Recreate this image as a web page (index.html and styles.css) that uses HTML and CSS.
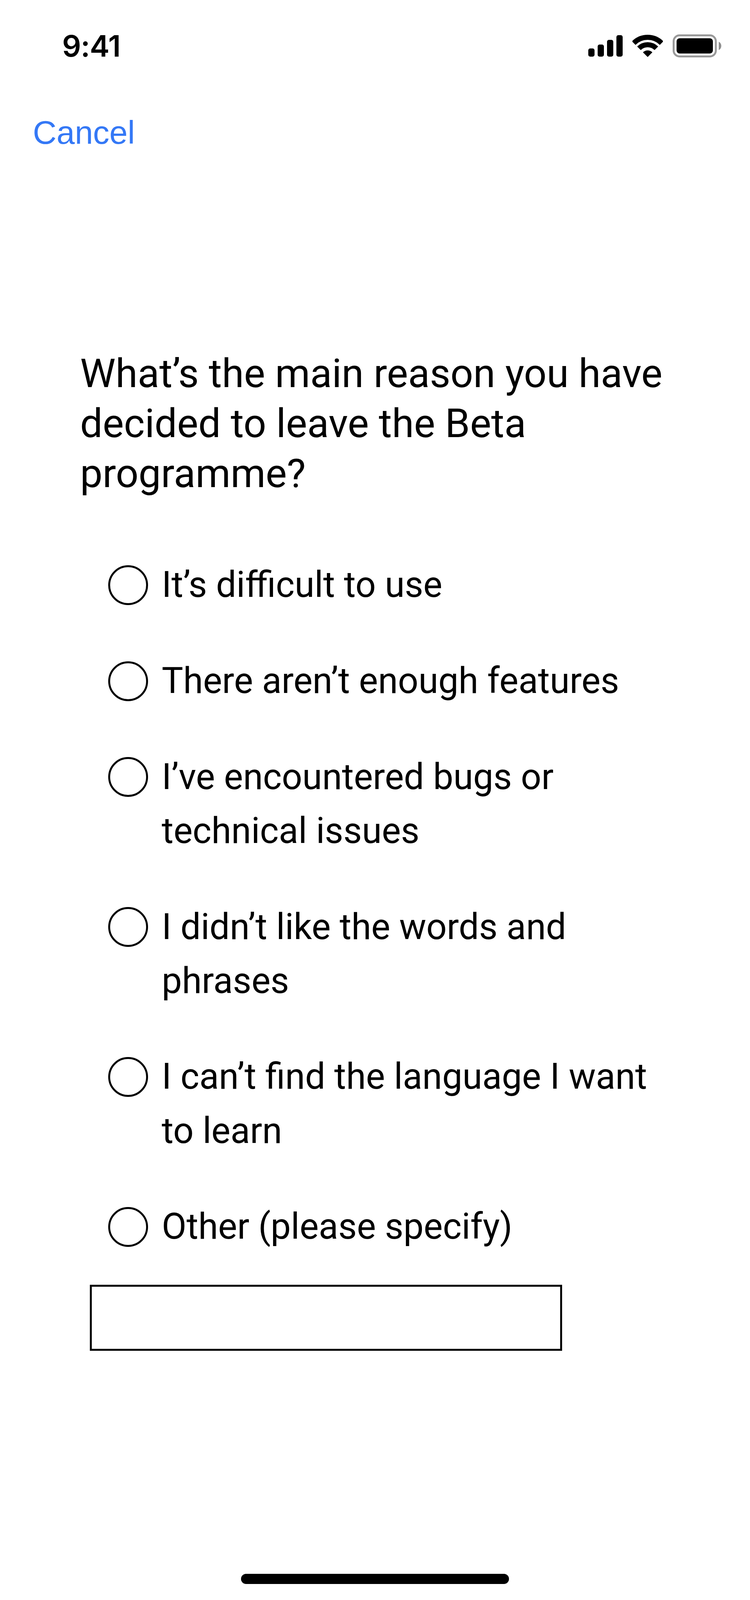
FILE: index.html
```html
<!DOCTYPE html>
<html lang="en">
<head>
    <meta charset="UTF-8">
    <meta name="viewport" content="width=device-width, initial-scale=1.0">
    <title>Leave the Beta programme</title>
    <link rel="stylesheet" href="styles.css">
</head>
<body>
    <div class="screen">
        <!-- Status bar -->
        <div class="status-bar">
            <span class="time">9:41</span>
            <div class="status-icons">
                <svg viewBox="0 0 88 55" width="88" height="55">
                    <rect x="0" y="34" width="16" height="21" rx="5"/>
                    <rect x="24" y="24" width="16" height="31" rx="5"/>
                    <rect x="48" y="12" width="16" height="43" rx="5"/>
                    <rect x="72" y="0" width="16" height="55" rx="5"/>
                </svg>
                <svg viewBox="0 0 78 57" width="78" height="57">
                    <path d="M3.3 21.3A50.5 50.5 0 0 1 74.7 21.3" fill="none" stroke="#000" stroke-width="13"/>
                    <path d="M16.7 34.7A31.5 31.5 0 0 1 61.3 34.7" fill="none" stroke="#000" stroke-width="13"/>
                    <path d="M39 57L27 45A17 17 0 0 1 51 45Z"/>
                </svg>
                <svg viewBox="0 0 125 59" width="125" height="59">
                    <rect x="2.500" y="2.500" width="108" height="54" rx="15" fill="none" stroke="#999" stroke-width="5"/>
                    <rect x="10" y="10" width="93" height="39" rx="8"/>
                    <path d="M118 19C122 20.500 124.500 25 124.500 29.500C124.500 34 122 38.500 118 40Z" fill="#8e8e8e"/>
                </svg>
            </div>
        </div>

        <a class="cancel" href="#">Cancel</a>

        <!-- Survey -->
        <form class="survey">
            <h1 class="question">What’s the main reason you have decided to leave the Beta programme?</h1>

            <div class="options">
                <label class="option"><input type="radio" name="reason"><span>It’s difficult to use</span></label>
                <label class="option"><input type="radio" name="reason"><span>There aren’t enough features</span></label>
                <label class="option"><input type="radio" name="reason"><span>I’ve encountered bugs or technical issues</span></label>
                <label class="option"><input type="radio" name="reason"><span>I didn’t like the words and phrases</span></label>
                <label class="option"><input type="radio" name="reason"><span>I can’t find the language I want to learn</span></label>
                <label class="option"><input type="radio" name="reason"><span>Other (please specify)</span></label>
            </div>

            <input class="other-input" type="text" aria-label="Other reason">
        </form>

        <div class="home-indicator"></div>
    </div>
</body>
</html>
```

FILE: styles.css
```css
* {
    margin: 0;
    padding: 0;
    box-sizing: border-box;
}

body {
    font-family: Roboto, sans-serif;
    background: #fff;
    color: #000;
}

.screen {
    display: flex;
    flex-direction: column;
    min-height: 100vh;
}

/* Status bar */
.status-bar {
    display: flex;
    justify-content: space-between;
    align-items: flex-start;
    padding: 88px 73px 0 159px;
}

.time {
    font-family: Inter, sans-serif;
    font-size: 76px;
    font-weight: 600;
    line-height: 58px;
    letter-spacing: -1px;
}

.status-icons {
    display: flex;
    align-items: center;
    gap: 25px;
}

/* Cancel link */
.cancel {
    align-self: flex-start;
    margin: 152px 0 0 84px;
    font-family: "Liberation Sans", sans-serif;
    font-size: 84px;
    line-height: 80px;
    color: #3478f6;
    text-decoration: none;
}

/* Survey */
.survey {
    margin-top: 513px;
    padding: 0 200px 0 205px;
}

.question {
    font-size: 102.4px;
    font-weight: 400;
    line-height: 128px;
}

.options {
    display: flex;
    flex-direction: column;
    gap: 107.4px;
    margin-top: 152.4px;
    padding-left: 72px;
}

.option {
    display: flex;
    gap: 35px;
    font-size: 92.16px;
    line-height: 138.24px;
}

.option input {
    appearance: none;
    flex: none;
    width: 102px;
    height: 102px;
    margin-top: 18.6px;
    border: 5px solid #000;
    border-radius: 50%;
    background: #fff;
}

.other-input {
    display: block;
    width: 1209px;
    height: 169px;
    margin: 80px 0 0 25px;
    border: 5px solid #000;
    border-radius: 0;
    background: #fff;
}

/* Home indicator */
.home-indicator {
    align-self: center;
    width: 686px;
    height: 26px;
    margin: auto 0 41px;
    border-radius: 13px;
    background: #000;
}
```
